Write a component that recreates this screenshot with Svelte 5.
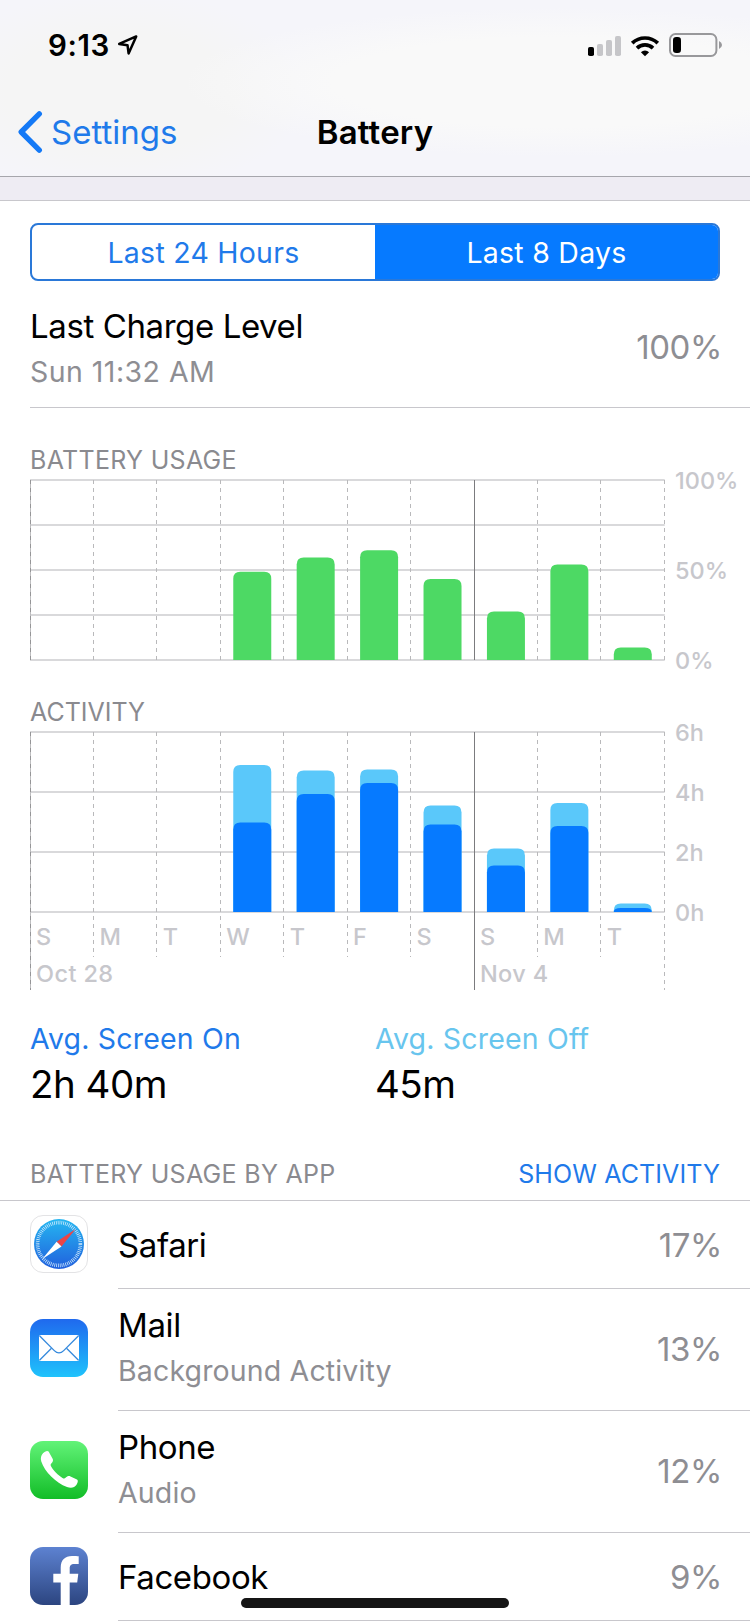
<script lang="ts">
  interface Day {
    label: string;
    battery: number;
    total: number;
    screenOn: number;
  }

  interface App {
    id: string;
    name: string;
    detail?: string;
    usage: string;
  }

  // battery in percent, activity in minutes
  const days: Day[] = [
    { label: "S", battery: 0, total: 0, screenOn: 0 },
    { label: "M", battery: 0, total: 0, screenOn: 0 },
    { label: "T", battery: 0, total: 0, screenOn: 0 },
    { label: "W", battery: 49, total: 294, screenOn: 179 },
    { label: "T", battery: 57, total: 283, screenOn: 236 },
    { label: "F", battery: 61, total: 285, screenOn: 258 },
    { label: "S", battery: 45, total: 213, screenOn: 175 },
    { label: "S", battery: 27, total: 127, screenOn: 93 },
    { label: "M", battery: 53, total: 218, screenOn: 172 },
    { label: "T", battery: 7, total: 17, screenOn: 8 },
  ];

  const apps: App[] = [
    { id: "safari", name: "Safari", usage: "17%" },
    { id: "mail", name: "Mail", detail: "Background Activity", usage: "13%" },
    { id: "phone", name: "Phone", detail: "Audio", usage: "12%" },
    { id: "facebook", name: "Facebook", usage: "9%" },
  ];

  const step = 63.42;
  const top = 10;
  const plotHeight = 180;
  const bottom = top + plotHeight;
  const plotWidth = step * days.length;
  const weekStart = 7;

  let range = $state("days");

  // bar with rounded top corners, standing on the baseline
  function bar(index: number, height: number) {
    const x = index * step + 13;
    const r = Math.min(7, height);
    const y = bottom - height;
    return `M${x} ${bottom}V${y + r}q0 ${-r} 7 ${-r}h24q7 0 7 ${r}V${bottom}z`;
  }
</script>

{#snippet grid(rows: number, labels: string[], footer: boolean)}
  {#each Array(rows + 1) as _, i}
    <line class="rule" x1="0" x2={plotWidth + 0.5} y1={top + (plotHeight / rows) * i} y2={top + (plotHeight / rows) * i} />
  {/each}
  {#each Array(days.length + 1) as _, i}
    {@const long = i === 0 || i === weekStart || i === days.length}
    {@const end = footer ? (long ? 268 : 235) : bottom}
    {@const x = Math.floor(i * step + 0.1) + 0.5}
    <line class="tick" class:edge={i === 0} class:week={i === weekStart} x1={x} x2={x} y1={top} y2={end} />
    {#if i === 0}
      <line class="tick" x1={x} x2={x} y1={top} y2={end} />
    {/if}
  {/each}
  {#each labels as label, i}
    <text class="axis" x="645" y={top + 9 + (plotHeight / (labels.length - 1)) * i}>{label}</text>
  {/each}
{/snippet}

<div class="screen">
  <header>
    <div class="status">
      <span class="time">9:13</span>
      <svg class="location" width="22" height="22" viewBox="0 0 22 22">
        <path d="M19.2 2.4 2.2 9.900l8.300 1.300 1.100 8.200z" />
      </svg>
      <svg class="indicators" width="136" height="26" viewBox="0 0 136 26">
        <rect x="1" y="15" width="6" height="9" rx="1.8" />
        <g fill="#c6c6c9">
          <rect x="10" y="12" width="6" height="12" rx="1.8" />
          <rect x="19" y="8" width="6" height="16" rx="1.8" />
          <rect x="28" y="4" width="6" height="20" rx="1.8" />
        </g>
        <g fill="none" stroke="#000" stroke-width="3.7">
          <path d="M45.2 11.2a18.4 18.4 0 0 1 25.6 0" />
          <path d="M50 16.1a11.6 11.6 0 0 1 16 0" />
        </g>
        <path d="M53.9 20.2a6 6 0 0 1 8.2 0L58 24.3z" />
        <rect x="83" y="2" width="46.4" height="22" rx="5.5" fill="none" stroke="#98989b" stroke-width="2" />
        <rect x="86" y="5" width="8" height="16" rx="3.2" />
        <path d="M132 9q3 1.6 3 4t-3 4z" fill="#98989b" />
      </svg>
    </div>
    <nav>
      <button class="back">
        <svg width="28" height="46" viewBox="0 0 28 46">
          <path d="M24.300 4.800 6.200 23l18.100 18.200" />
        </svg>
        <span>Settings</span>
      </button>
      <h1>Battery</h1>
    </nav>
  </header>
  <div class="band"></div>

  <main>
    <div class="segments">
      <button class:active={range === "hours"} onclick={() => (range = "hours")}>Last 24 Hours</button>
      <button class:active={range === "days"} onclick={() => (range = "days")}>Last 8 Days</button>
    </div>

    <section class="charge">
      <div>
        <div class="title">Last Charge Level</div>
        <div class="detail">Sun 11:32 AM</div>
      </div>
      <span class="value">100%</span>
    </section>

    <section class="charts">
      <h2>BATTERY USAGE</h2>
      <svg width="720" height="200" viewBox="0 0 720 200">
        {@render grid(4, ["100%", "50%", "0%"], false)}
        {#each days as day, i}
          {#if day.battery}
            <path class="battery" d={bar(i, day.battery * 1.8)} />
          {/if}
        {/each}
      </svg>

      <h2 class="second">ACTIVITY</h2>
      <svg width="720" height="278" viewBox="0 0 720 278">
        {@render grid(3, ["6h", "4h", "2h", "0h"], true)}
        {#each days as day, i}
          {#if day.total}
            <path class="off" d={bar(i, day.total / 2)} />
            <path class="on" d={bar(i, day.screenOn / 2)} />
          {/if}
          <text class="axis" x={i * step + 6} y="223">{day.label}</text>
        {/each}
        <text class="axis date" x="6" y="259.5">Oct 28</text>
        <text class="axis date" x={weekStart * step + 6} y="259.5">Nov 4</text>
      </svg>
    </section>

    <section class="averages">
      <div>
        <div class="caption">Avg. Screen On</div>
        <div class="amount">2h 40m</div>
      </div>
      <div>
        <div class="caption light">Avg. Screen Off</div>
        <div class="amount">45m</div>
      </div>
    </section>

    <div class="list-header">
      <h2>BATTERY USAGE BY APP</h2>
      <button>SHOW ACTIVITY</button>
    </div>

    <ul>
      {#each apps as app}
        <li class:tall={app.detail}>
          <svg class="icon" width="58" height="58" viewBox="0 0 58 58">
            {#if app.id === "safari"}
              <defs>
                <linearGradient id="safari" x1="0" y1="0" x2="0" y2="1">
                  <stop offset="0" stop-color="#25b6f1" />
                  <stop offset="1" stop-color="#2160dd" />
                </linearGradient>
              </defs>
              <rect x="0.5" y="0.5" width="57" height="57" rx="12.5" fill="#fff" stroke="#e3e3e5" />
              <circle cx="29" cy="29" r="25" fill="url(#safari)" />
              <circle cx="29" cy="29" r="21.4" fill="none" stroke="#d4ecfc" stroke-width="3.6" stroke-dasharray="0.75 1.117" />
              <path d="M45.7 14.1 26.6 26.8l4.9 4.8z" fill="#ec4547" />
              <path d="M12.3 43.9l14.3-17.1 4.9 4.8z" fill="#fff" />
            {:else if app.id === "mail"}
              <defs>
                <linearGradient id="mail" x1="0" y1="0" x2="0" y2="1">
                  <stop offset="0" stop-color="#1f69ee" />
                  <stop offset="1" stop-color="#1fc3fc" />
                </linearGradient>
              </defs>
              <rect width="58" height="58" rx="13" fill="url(#mail)" />
              <rect x="9" y="16" width="40" height="26" rx="1.6" fill="#fff" />
              <g fill="none" stroke="#3489dd" stroke-width="1.3">
                <path d="M9.5 16.7 24.3 31.6q4.7 4.6 9.4 0L48.5 16.7" />
                <path d="M9.5 41.3l12-12.1M48.5 41.3l-12-12.1" />
              </g>
            {:else if app.id === "phone"}
              <defs>
                <linearGradient id="phone" x1="0" y1="0" x2="0" y2="1">
                  <stop offset="0" stop-color="#62f378" />
                  <stop offset="1" stop-color="#12bd27" />
                </linearGradient>
              </defs>
              <rect width="58" height="58" rx="13" fill="url(#phone)" />
              <path
                d="M13 12.3c1.6-2 4.6-3.1 5.6-1.7l3.9 7c1 1.9.5 3.4-1.2 4.9-1 .9-.8 1.9 0 3.3 2.2 4 6.7 8.5 11.2 11.2 1.4.9 2.3.7 3.3-.4 1.2-1.4 3-2 4.7-1.2l6.5 3.2c1.3.8 1 2.9-.5 5.2-2 3-5.5 3.7-9.5 2.2-11-4-22.5-15.5-25.7-25.5-1-3.5-.3-5.9 1.7-8.2z"
                fill="#fff"
              />
            {:else}
              <defs>
                <linearGradient id="facebook" x1="0" y1="0" x2="0" y2="1">
                  <stop offset="0" stop-color="#5d82d1" />
                  <stop offset="1" stop-color="#2c4580" />
                </linearGradient>
              </defs>
              <rect width="58" height="58" rx="13" fill="url(#facebook)" />
              <path
                d="M30.7 58V35.5h-7.4v-8.8h7.4v-6C30.7 13 35 9 42 9c3 0 5.5.1 6.7.3V17h-4.3c-3.8 0-4.7 1.8-4.7 4.6v5.1h8.6l-1.1 8.8h-7.5V58z"
                fill="#fff"
              />
            {/if}
          </svg>
          <div class="row">
            <div>
              <div class="title">{app.name}</div>
              {#if app.detail}
                <div class="detail">{app.detail}</div>
              {/if}
            </div>
            <span class="value">{app.usage}</span>
          </div>
        </li>
      {/each}
    </ul>
  </main>
  <div class="home"></div>
</div>

<style>
  :global(body) {
    background: #fff;
  }

  .screen {
    position: relative;
    width: 750px;
    height: 1624px;
    overflow: hidden;
    background: #fff;
    color: #000;
    font-family: Inter, "Liberation Sans", sans-serif;
  }

  h1,
  h2,
  ul {
    margin: 0;
    padding: 0;
    font-weight: 400;
  }

  button {
    padding: 0;
    border: 0;
    background: none;
    font: inherit;
    color: #1f7aea;
  }

  svg {
    display: block;
    flex: none;
    overflow: visible;
  }

  header {
    height: 176px;
    border-bottom: 1px solid #a6a6ac;
    background:
      radial-gradient(ellipse 380px 75px at 560px 82px, #f9f9f9 60%, transparent),
      radial-gradient(ellipse 190px 100px at 120px 92px, #f5f5f5 60%, transparent),
      #f5f5fa;
  }

  .status {
    box-sizing: border-box;
    display: flex;
    align-items: center;
    height: 88px;
    padding: 2px 27px 0 48px;
  }

  .time {
    font-size: 29.5px;
    font-weight: 600;
    letter-spacing: 0.6px;
  }

  .location {
    margin-left: 7px;
  }

  .location path {
    fill: none;
    stroke: #000;
    stroke-width: 2.5;
    stroke-linejoin: round;
  }

  .indicators {
    margin-left: auto;
  }

  nav {
    display: grid;
    grid-template-columns: 1fr auto 1fr;
    align-items: center;
    height: 88px;
  }

  .back {
    display: flex;
    align-items: center;
    gap: 8px;
    padding-left: 15px;
    font-size: 33px;
  }

  .back path {
    fill: none;
    stroke: #1479f6;
    stroke-width: 5.4;
    stroke-linecap: round;
    stroke-linejoin: round;
  }

  h1 {
    font-size: 33px;
    font-weight: 600;
    letter-spacing: 0.2px;
  }

  .band {
    height: 23px;
    border-bottom: 1px solid #c8c7cc;
    background: #eeecf3;
  }

  .segments {
    box-sizing: border-box;
    display: flex;
    height: 58px;
    margin: 22px 30px 0;
    border: 2px solid #2a78d8;
    border-radius: 8px;
    overflow: hidden;
  }

  .segments button {
    flex: 343px 0 0;
    font-size: 28.5px;
    letter-spacing: 0.25px;
  }

  .segments .active {
    flex-grow: 1;
    background: #067aff;
    color: #fff;
  }

  .charge {
    display: flex;
    align-items: center;
    justify-content: space-between;
    height: 92px;
    margin-left: 30px;
    padding: 22px 30px 12px 0;
    border-bottom: 1px solid #c8c7cc;
  }

  .title,
  .detail {
    line-height: 46px;
    white-space: nowrap;
  }

  .title {
    font-size: 33px;
    letter-spacing: -0.4px;
  }

  .detail {
    font-size: 28.5px;
    letter-spacing: 0.15px;
    color: #8e8e93;
  }

  .charge .detail {
    letter-spacing: 0.45px;
  }

  .value {
    margin-right: -2px;
    font-size: 33px;
    letter-spacing: -0.4px;
    color: #8e8e93;
  }

  .charge .value {
    padding-bottom: 5px;
  }

  .charts {
    padding: 42px 0 0 30px;
  }

  h2 {
    font-size: 25px;
    line-height: 20px;
    letter-spacing: 0.3px;
    color: #8a8a8f;
  }

  .second {
    margin-top: 32px;
    letter-spacing: 0;
  }

  .rule {
    stroke: #d9d9db;
    stroke-width: 2;
  }

  .tick {
    stroke: #b9b9bb;
    stroke-width: 1;
    stroke-dasharray: 4 4;
  }

  .edge {
    stroke: #bdbdbf;
    stroke-dasharray: none;
  }

  .edge + .tick {
    stroke: #959597;
  }

  .week {
    stroke: #7b7b7e;
    stroke-dasharray: none;
  }

  .battery {
    fill: #4dd964;
  }

  .off {
    fill: #5ac8fa;
  }

  .on {
    fill: #067aff;
  }

  .axis {
    fill: #c7c7cc;
    font-size: 23.5px;
    font-weight: 500;
  }

  .date {
    letter-spacing: 0.4px;
  }

  .averages {
    display: grid;
    grid-template-columns: 345px 1fr;
    padding: 16px 30px 0;
  }

  .caption {
    font-size: 28.5px;
    line-height: 45px;
    letter-spacing: 0.18px;
    color: #1f7aea;
  }

  .light {
    color: #68c5ee;
  }

  .amount {
    font-size: 38.5px;
    line-height: 46px;
    letter-spacing: -0.5px;
  }

  .list-header {
    display: flex;
    align-items: flex-end;
    justify-content: space-between;
    height: 77px;
    padding: 0 30px 16px;
    border-bottom: 1px solid #c8c7cc;
  }

  .list-header button {
    font-size: 25px;
    line-height: 20px;
    letter-spacing: 0.1px;
  }

  ul {
    list-style: none;
  }

  li {
    display: flex;
    align-items: center;
    height: 88px;
    padding-left: 30px;
  }

  .icon {
    margin-bottom: 2px;
  }

  .row {
    box-sizing: border-box;
    flex: 1;
    display: flex;
    align-items: center;
    justify-content: space-between;
    height: 100%;
    margin-left: 30px;
    padding-right: 30px;
    border-bottom: 1px solid #c8c7cc;
  }

  .tall {
    height: 122px;
  }

  .tall .icon {
    margin-bottom: 4px;
  }

  .tall .row {
    padding-bottom: 3px;
  }

  .tall .value {
    padding-top: 2px;
  }

  .home {
    position: absolute;
    left: 241px;
    bottom: 16px;
    width: 268px;
    height: 10px;
    border-radius: 5px;
    background: #151515;
  }
</style>
